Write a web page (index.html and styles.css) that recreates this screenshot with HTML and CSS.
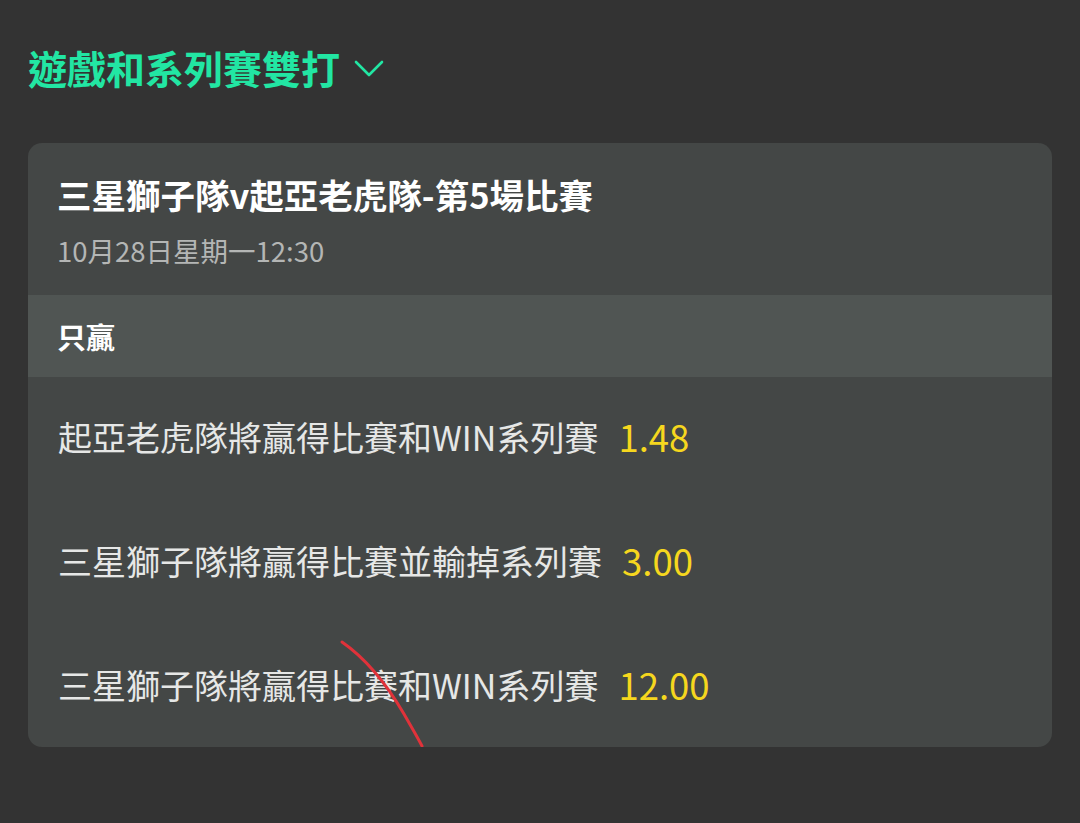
FILE: index.html
```html
<!DOCTYPE html>
<html lang="zh-Hant">
<head>
    <meta charset="UTF-8">
    <meta name="viewport" content="width=device-width, initial-scale=1.0">
    <title>遊戲和系列賽雙打</title>
    <link rel="stylesheet" href="styles.css">
</head>
<body>
    <div class="page">
        <h1 class="market-title">
            遊戲和系列賽雙打
            <svg class="chevron" width="30" height="20" viewBox="0 0 30 20">
                <polyline points="2,4 15,17 28,4" fill="none" stroke="#22e6a3" stroke-width="2.6" stroke-linecap="round" stroke-linejoin="round"/>
            </svg>
        </h1>
        <div class="card">
            <div class="card-head">
                <div class="event-name">三星獅子隊v起亞老虎隊-第5場比賽</div>
                <div class="event-date">10月28日星期一12:30</div>
            </div>
            <div class="section-label">只贏</div>
            <ul class="selections">
                <li><span class="sel-name">起亞老虎隊將贏得比賽和WIN系列賽</span><span class="odds">1.48</span></li>
                <li><span class="sel-name">三星獅子隊將贏得比賽並輸掉系列賽</span><span class="odds">3.00</span></li>
                <li><span class="sel-name">三星獅子隊將贏得比賽和WIN系列賽</span><span class="odds">12.00</span></li>
            </ul>
            <svg class="scribble" width="100" height="120" viewBox="0 0 100 120">
                <path d="M4,4 C30,22 52,52 66,76 C74,90 80,100 84,108" fill="none" stroke="#e0323a" stroke-width="3" stroke-linecap="round"/>
            </svg>
        </div>
    </div>
</body>
</html>
```

FILE: styles.css
```css
body {
    margin: 0;
    background-color: #333333;
    font-family: "Noto Sans CJK TC", "Noto Sans", sans-serif;
    width: 1080px;
    height: 823px;
    overflow: hidden;
}
.page {
    padding: 0 28px;
}
.market-title {
    margin: 0;
    height: 143px;
    box-sizing: border-box;
    padding-top: 42px;
    padding-bottom: 51px;
    display: flex;
    align-items: center;
    gap: 14px;
    color: #22e6a3;
    font-size: 39px;
    font-weight: 700;
    line-height: 50px;
}
.chevron {
    margin-top: 2px;
}
.card {
    position: relative;
    background-color: #444746;
    border-radius: 14px;
    height: 604px;
    overflow: hidden;
}
.card-head {
    padding: 28px 29px 0;
    height: 152px;
    box-sizing: border-box;
}
.event-name {
    color: #ffffff;
    font-size: 34.5px;
    font-weight: 700;
    line-height: 46px;
}
.event-date {
    margin-top: 15px;
    color: #b4b6b5;
    font-size: 27.5px;
    line-height: 36px;
}
.section-label {
    background-color: #505553;
    height: 82px;
    display: flex;
    align-items: center;
    padding: 0 29px;
    color: #ffffff;
    font-size: 29px;
    font-weight: 700;
}
.selections {
    list-style: none;
    margin: 0;
    padding: 0;
}
.selections li {
    height: 124px;
    box-sizing: border-box;
    padding: 0 30px 5px;
    display: flex;
    align-items: center;
    gap: 20px;
    font-size: 34px;
}
.sel-name {
    color: #e6e7e6;
}
.odds {
    color: #f6d71e;
    font-size: 36.5px;
}
.scribble {
    position: absolute;
    left: 310px;
    top: 495px;
}
```
